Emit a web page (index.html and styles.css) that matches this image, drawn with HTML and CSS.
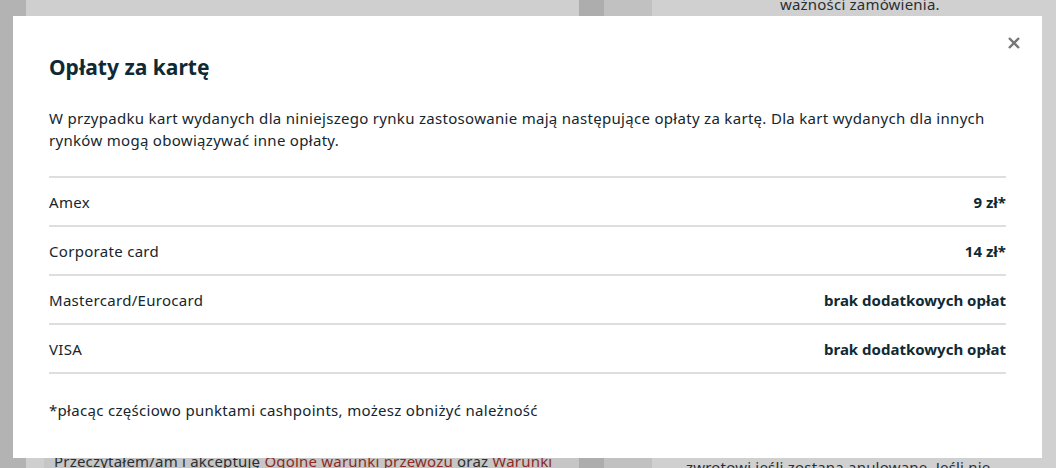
FILE: index.html
```html
<!DOCTYPE html>
<html lang="pl">
<head>
<meta charset="utf-8">
<link rel="stylesheet" href="styles.css">
</head>
<body>
<div class="page">
  <div class="strip-a"></div>
  <div class="col-main">
    <div class="main-top"></div>
    <div class="main-bottom">
      <p class="accept">Przeczytałem/am i akceptuję <span class="link">Ogólne warunki przewozu</span> oraz <span class="link">Warunki</span></p>
    </div>
  </div>
  <div class="gap-dark"></div>
  <div class="gap-mid"></div>
  <div class="col-side">
    <p class="side-top">ważności zamówienia.</p>
    <p class="side-bottom">zwrotowi jeśli zostaną anulowane. Jeśli nie</p>
  </div>
</div>

<div class="modal">
  <button class="close" aria-label="Zamknij">
    <svg width="12" height="12" viewBox="0 0 12 12"><path d="M1 1L11 11M11 1L1 11" stroke="#777" stroke-width="2.4" stroke-linecap="butt"/></svg>
  </button>
  <h2 class="title">Opłaty za kartę</h2>
  <p class="intro">W przypadku kart wydanych dla niniejszego rynku zastosowanie mają następujące opłaty za kartę. Dla kart wydanych dla innych rynków mogą obowiązywać inne opłaty.</p>
  <ul class="fees">
    <li class="fee"><span>Amex</span><strong>9 zł*</strong></li>
    <li class="fee"><span>Corporate card</span><strong>14 zł*</strong></li>
    <li class="fee"><span>Mastercard/Eurocard</span><strong>brak dodatkowych opłat</strong></li>
    <li class="fee"><span>VISA</span><strong>brak dodatkowych opłat</strong></li>
  </ul>
  <p class="note">*płacąc częściowo punktami cashpoints, możesz obniżyć należność</p>
</div>
</body>
</html>
```

FILE: styles.css
```css
* { box-sizing: border-box; }
html, body { margin: 0; padding: 0; }
body {
  width: 1056px;
  height: 468px;
  overflow: hidden;
  font-family: "Noto Sans", Lato, sans-serif;
  background: #cfcfcf;
  position: relative;
}
.page {
  display: flex;
  height: 468px;
}
.strip-a { width: 26px; background: #b3b3b3; }
.col-main {
  width: 553px;
  display: flex;
  flex-direction: column;
  background: #cfcfcf;
}
.main-top { flex: 1; }
.main-bottom {
  height: 20px;
  background: #c6c6c6;
  margin-left: 18px;
}
.accept {
  margin: 0;
  padding: 3px 0 0 10px;
  font-size: 15px;
  line-height: 20px;
  letter-spacing: 0.2px;
  color: #2a2f33;
  white-space: nowrap;
}
.link { color: #8e2a22; }
.gap-dark { width: 25px; background: #adadad; }
.gap-mid { width: 48px; background: #c1c1c1; }
.col-side {
  flex: 1;
  display: flex;
  flex-direction: column;
  justify-content: space-between;
  background: #d0d0d0;
  padding-left: 34px;
}
.side-top, .side-bottom {
  margin: 0;
  font-size: 15px;
  line-height: 20px;
  letter-spacing: 0.2px;
  color: #2a2f33;
  white-space: nowrap;
}
.side-top { margin-top: -6px; padding-left: 94px; }
.side-bottom { margin-bottom: -9px; }

.modal {
  position: absolute;
  left: 13px;
  top: 16px;
  width: 1029px;
  height: 442px;
  background: #fff;
  padding: 0 36px;
  color: #0f2a35;
}
.close {
  position: absolute;
  top: 21px;
  right: 22px;
  width: 12px;
  height: 12px;
  padding: 0;
  border: 0;
  background: none;
  display: block;
}
.close svg { display: block; }
.title {
  margin: 0;
  padding-top: 36px;
  font-size: 21px;
  line-height: 30px;
  font-weight: 700;
  color: #0f2a35;
}
.intro {
  margin: 25px 0 0;
  font-size: 15px;
  line-height: 22px;
  letter-spacing: 0.3px;
  color: #14262e;
}
.fees {
  list-style: none;
  margin: 25px 0 0;
  padding: 0;
  border-top: 2px solid #dedede;
}
.fee {
  display: flex;
  justify-content: space-between;
  align-items: center;
  height: 49px;
  border-bottom: 2px solid #dedede;
  font-size: 15px;
  color: #14262e;
}
.fee span { letter-spacing: 0.3px; }
.fee strong { font-weight: 700; color: #0f2a35; }
.note {
  margin: 25px 0 0;
  font-size: 15px;
  line-height: 22px;
  letter-spacing: 0.3px;
  color: #14262e;
}
```
